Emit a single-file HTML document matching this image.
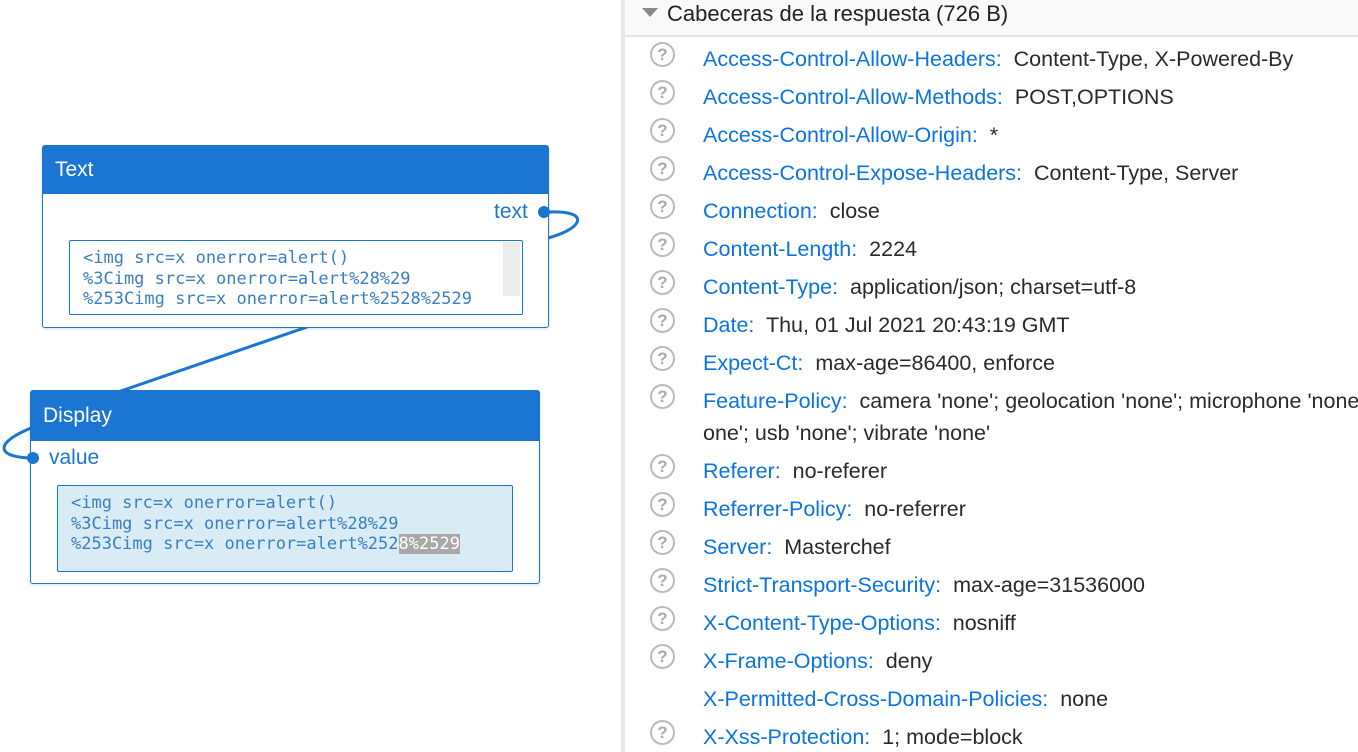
<!DOCTYPE html>
<html><head><meta charset="utf-8"><style>
*{margin:0;padding:0;box-sizing:border-box}
body{width:1358px;height:752px;overflow:hidden;background:#fff;position:relative;font-family:"Liberation Sans",sans-serif}
.node{position:absolute;border:1px solid #1976d2;border-radius:3px;background:#fff;box-shadow:0 1px 3px rgba(0,0,0,.15)}
.hd{background:#1b76d3;color:#fff;font-size:21px;height:48px;line-height:48px;padding-left:12px}
.ta{position:absolute;border:1px solid #1976d2;border-radius:2px;font-family:"DejaVu Sans Mono","Liberation Mono",monospace;font-size:17px;line-height:20.5px;color:#3a7fc0;padding:7px 0 0 13px;white-space:pre;overflow:hidden}
.lbl{position:absolute;color:#1976d2;font-size:21px}
.panel{position:absolute;left:621px;top:0;width:737px;height:752px;background:#fff;border-left:4px solid #e8e8e8;overflow:hidden}
.phd{position:absolute;left:0;top:0;width:737px;height:37px;background:#f9f9f9;border-bottom:2px solid #e4e4e4;font-size:22px;color:#222;line-height:27px;padding-left:42px}
.tri{position:absolute;left:17px;top:8px;width:0;height:0;border-left:8px solid transparent;border-right:8px solid transparent;border-top:9px solid #888}
.row{position:absolute;left:78px;font-size:21.5px;line-height:32px;color:#2a2a2a;white-space:nowrap}
.k{color:#0a74e0}
.q{position:absolute;left:25px;width:25px;height:25px;border:2px solid #bbb;border-radius:50%;color:#aaa;font-size:17px;font-weight:bold;text-align:center;line-height:21px}
</style></head><body>
<svg width="620" height="752" style="position:absolute;left:0;top:0">
<path d="M548 212 C590 210 585 228 548 238" stroke="#1976d2" stroke-width="3" fill="none"/>
<path d="M307 327 Q210 360 118 392" stroke="#1976d2" stroke-width="3" fill="none"/>
<path d="M31 428 C-10 445 0 458 33 458" stroke="#1976d2" stroke-width="3" fill="none"/>
</svg>
<div class="node" style="left:42px;top:145px;width:507px;height:183px">
<div class="hd">Text</div>
</div>
<div class="lbl" style="left:494px;top:200px">text</div>
<div style="position:absolute;left:538px;top:206px;width:12px;height:12px;border-radius:50%;background:#1976d2"></div>
<div class="ta" style="left:69px;top:240px;width:454px;height:75px;background:#fff">&lt;img src=x onerror=alert()
%3Cimg src=x onerror=alert%28%29
%253Cimg src=x onerror=alert%2528%2529</div>
<div style="position:absolute;left:503px;top:242px;width:17px;height:54px;background:#ececec"></div>
<div class="node" style="left:30px;top:390px;width:510px;height:194px">
<div class="hd" style="height:50px;line-height:50px">Display</div>
</div>
<div style="position:absolute;left:27px;top:452px;width:12px;height:12px;border-radius:50%;background:#1976d2"></div>
<div class="lbl" style="left:49px;top:446px">value</div>
<div class="ta" style="left:57px;top:485px;width:456px;height:87px;background:#d9ebf5">&lt;img src=x onerror=alert()
%3Cimg src=x onerror=alert%28%29
%253Cimg src=x onerror=alert%252<span style="background:#a8a8a8;color:#fff">8%2529</span></div>
<div class="panel">
<div class="phd"><div class="tri"></div>Cabeceras de la respuesta (726 B)</div>
<div class="q" style="top:42px">?</div><div class="row" style="top:43px"><span class="k">Access-Control-Allow-Headers:</span>&nbsp; Content-Type, X-Powered-By</div>
<div class="q" style="top:80px">?</div><div class="row" style="top:81px"><span class="k">Access-Control-Allow-Methods:</span>&nbsp; POST,OPTIONS</div>
<div class="q" style="top:118px">?</div><div class="row" style="top:119px"><span class="k">Access-Control-Allow-Origin:</span>&nbsp; *</div>
<div class="q" style="top:156px">?</div><div class="row" style="top:157px"><span class="k">Access-Control-Expose-Headers:</span>&nbsp; Content-Type, Server</div>
<div class="q" style="top:194px">?</div><div class="row" style="top:195px"><span class="k">Connection:</span>&nbsp; close</div>
<div class="q" style="top:232px">?</div><div class="row" style="top:233px"><span class="k">Content-Length:</span>&nbsp; 2224</div>
<div class="q" style="top:270px">?</div><div class="row" style="top:271px"><span class="k">Content-Type:</span>&nbsp; application/json; charset=utf-8</div>
<div class="q" style="top:308px">?</div><div class="row" style="top:309px"><span class="k">Date:</span>&nbsp; Thu, 01 Jul 2021 20:43:19 GMT</div>
<div class="q" style="top:346px">?</div><div class="row" style="top:347px"><span class="k">Expect-Ct:</span>&nbsp; max-age=86400, enforce</div>
<div class="q" style="top:384px">?</div><div class="row" style="top:385px"><span class="k">Feature-Policy:</span>&nbsp; camera 'none'; geolocation 'none'; microphone 'none'; payment 'n</div>
<div class="row" style="top:417px">one'; usb 'none'; vibrate 'none'</div>
<div class="q" style="top:454px">?</div><div class="row" style="top:455px"><span class="k">Referer:</span>&nbsp; no-referer</div>
<div class="q" style="top:492px">?</div><div class="row" style="top:493px"><span class="k">Referrer-Policy:</span>&nbsp; no-referrer</div>
<div class="q" style="top:530px">?</div><div class="row" style="top:531px"><span class="k">Server:</span>&nbsp; Masterchef</div>
<div class="q" style="top:568px">?</div><div class="row" style="top:569px"><span class="k">Strict-Transport-Security:</span>&nbsp; max-age=31536000</div>
<div class="q" style="top:606px">?</div><div class="row" style="top:607px"><span class="k">X-Content-Type-Options:</span>&nbsp; nosniff</div>
<div class="q" style="top:644px">?</div><div class="row" style="top:645px"><span class="k">X-Frame-Options:</span>&nbsp; deny</div>
<div class="row" style="top:683px"><span class="k">X-Permitted-Cross-Domain-Policies:</span>&nbsp; none</div>
<div class="q" style="top:720px">?</div><div class="row" style="top:721px"><span class="k">X-Xss-Protection:</span>&nbsp; 1; mode=block</div>
</div>
</body></html>
